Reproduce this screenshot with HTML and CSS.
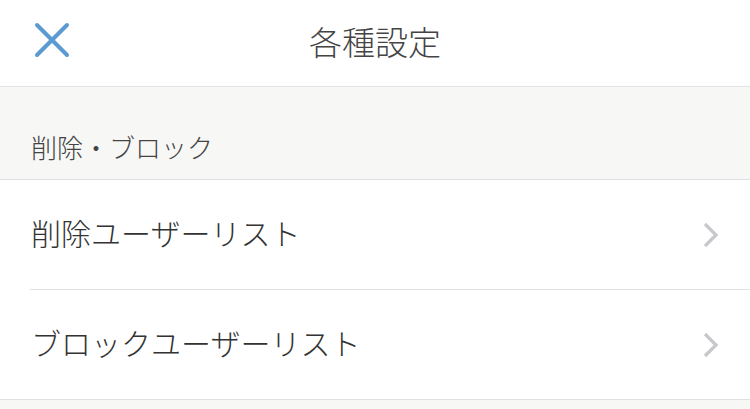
FILE: index.html
```html
<!DOCTYPE html>
<html lang="ja">
    <head>
        <meta charset="UTF-8" />
        <meta name="viewport" content="width=device-width, initial-scale=1.0" />
        <title>各種設定</title>
        <link rel="stylesheet" href="styles.css">
    </head>

    <body>
        <div class="header">
            <a class="close" href="#">
                <svg width="36" height="36" viewBox="0 0 36 36">
                    <path d="M3 3 L33 33 M33 3 L3 33" stroke="#5b9bd1" stroke-width="4" stroke-linecap="round" fill="none" />
                </svg>
            </a>
            <div class="title">各種設定</div>
        </div>
        <div class="section-title">削除・ブロック</div>
        <ul class="menu">
            <li>
                <span>削除ユーザーリスト</span>
                <svg class="arrow" width="18" height="26" viewBox="0 0 18 26">
                    <path d="M3 2 L14 13 L3 24" stroke="#c7c7cc" stroke-width="3.2" fill="none" />
                </svg>
            </li>
            <li>
                <span>ブロックユーザーリスト</span>
                <svg class="arrow" width="18" height="26" viewBox="0 0 18 26">
                    <path d="M3 2 L14 13 L3 24" stroke="#c7c7cc" stroke-width="3.2" fill="none" />
                </svg>
            </li>
        </ul>
        <div class="bottom"></div>
    </body>
</html>
```

FILE: styles.css
```css
* {
    padding: 0;
    margin: 0;
}

body {
    background-color: #f7f7f5;
    font-family: "Noto Sans CJK JP", "Noto Sans", sans-serif;
    font-weight: 300;
    color: #333;
}

.header {
    position: relative;
    height: 86px;
    background-color: #fff;
    border-bottom: 1px solid #e3e3e3;
    display: flex;
    align-items: center;
    justify-content: center;
}

.header .close {
    position: absolute;
    left: 34px;
    top: 22px;
    display: block;
    width: 36px;
    height: 36px;
}

.header .title {
    font-size: 33px;
    color: #444;
    line-height: 1;
    margin-top: -4px;
}

.section-title {
    height: 93px;
    box-sizing: border-box;
    padding: 0 0 0 31px;
    display: flex;
    align-items: flex-end;
    padding-bottom: 19px;
    font-size: 26px;
    line-height: 1;
    color: #444;
    border-bottom: 1px solid #e0e0e0;
}

.menu {
    list-style: none;
    background-color: #fff;
    padding-left: 30px;
    border-bottom: 1px solid #e0e0e0;
}

.menu li {
    height: 109px;
    display: flex;
    align-items: center;
    justify-content: space-between;
    padding-right: 30px;
    font-size: 30px;
    line-height: 1;
}

.menu li + li {
    border-top: 1px solid #e3e3e3;
}

.menu li span {
    margin-left: 1px;
    margin-bottom: 6px;
}
```
